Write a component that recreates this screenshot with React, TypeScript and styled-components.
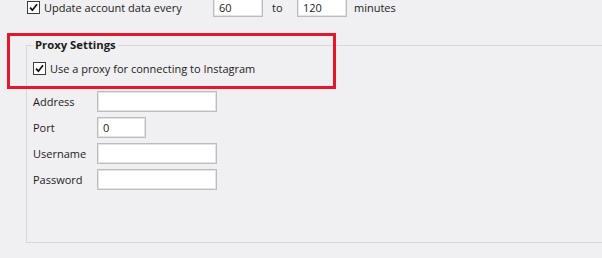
import React from 'react';
import styled, { createGlobalStyle } from 'styled-components';

const GlobalStyle = createGlobalStyle`
  html, body {
    margin: 0;
    padding: 0;
    background: #f0eff1;
  }
`;

const Page = styled.div`
  position: relative;
  width: 602px;
  height: 258px;
  overflow: hidden;
  background: #f0eff1;
  font-family: 'Open Sans', 'Noto Sans', sans-serif;
  font-size: 11px;
  color: #1c1c1c;
`;

const TopRow = styled.div`
  display: flex;
  align-items: center;
  height: 19px;
  margin-top: -2px;
  padding-left: 27px;
`;

const CheckLabel = styled.label<{ $w?: number }>`
  display: flex;
  align-items: center;
  gap: 4px;
  width: ${(p) => (p.$w ? `${p.$w}px` : 'auto')};
  white-space: nowrap;
`;

const Box = styled.span`
  width: 11px;
  height: 11px;
  border: 1px solid #3c3c3c;
  background: #fff;
  display: flex;
  align-items: center;
  justify-content: center;
  flex-shrink: 0;
`;

const Field = styled.div<{ $w: number; $h?: number }>`
  width: ${(p) => p.$w}px;
  height: ${(p) => p.$h ?? 21}px;
  box-sizing: border-box;
  background: #fff;
  border: 1px solid #bdbdbd;
  box-shadow: inset 0 0 0 1px #e4e4e4;
  padding: 0 5px;
  display: flex;
  align-items: center;
  font-size: 11px;
`;

const Word = styled.span<{ $ml: number; $w?: number }>`
  margin-left: ${(p) => p.$ml}px;
  ${(p) => (p.$w ? `width: ${p.$w}px;` : '')}
`;

const Group = styled.fieldset`
  margin: 21px 0 0 26px;
  width: 620px;
  height: 205px;
  box-sizing: border-box;
  border: 1px solid #d9d9d9;
  border-right: none;
  padding: 0 0 0 6px;
  min-width: 0;
`;

const Legend = styled.legend`
  font-weight: 700;
  font-size: 11.3px;
  padding: 0 2px;
  margin-left: 0;
  line-height: 14px;
`;

const ProxyRow = styled.div`
  margin-top: 9px;
  height: 14px;
  display: flex;
  align-items: center;
`;

const Form = styled.div`
  display: grid;
  grid-template-columns: 64px auto;
  row-gap: 5px;
  margin-top: 16px;
  justify-items: start;
  align-items: center;
`;

const Label = styled.span`
  line-height: 20px;
`;

const Highlight = styled.div`
  position: absolute;
  left: 7px;
  top: 33px;
  width: 323px;
  height: 50px;
  border: 3px solid #e3192b;
  pointer-events: none;
`;

const Check = () => (
  <Box>
    <svg width="9" height="9" viewBox="0 0 9 9">
      <path d="M1 4.6 L3.4 7.2 L8 1.3" fill="none" stroke="#111" strokeWidth="1.7" />
    </svg>
  </Box>
);

export default function App() {
  return (
    <Page>
      <GlobalStyle />
      <TopRow>
        <CheckLabel $w={186}>
          <Check />
          Update account data every
        </CheckLabel>
        <Field $w={50} $h={19}>60</Field>
        <Word $ml={9} $w={25}>to</Word>
        <Field $w={50} $h={19}>120</Field>
        <Word $ml={7}>minutes</Word>
      </TopRow>

      <Group>
        <Legend>Proxy Settings</Legend>
        <ProxyRow>
          <CheckLabel>
            <Check />
            Use a proxy for connecting to Instagram
          </CheckLabel>
        </ProxyRow>
        <Form>
          <Label>Address</Label>
          <Field $w={120} />
          <Label>Port</Label>
          <Field $w={49}>0</Field>
          <Label>Username</Label>
          <Field $w={120} />
          <Label>Password</Label>
          <Field $w={120} />
        </Form>
      </Group>

      <Highlight />
    </Page>
  );
}
